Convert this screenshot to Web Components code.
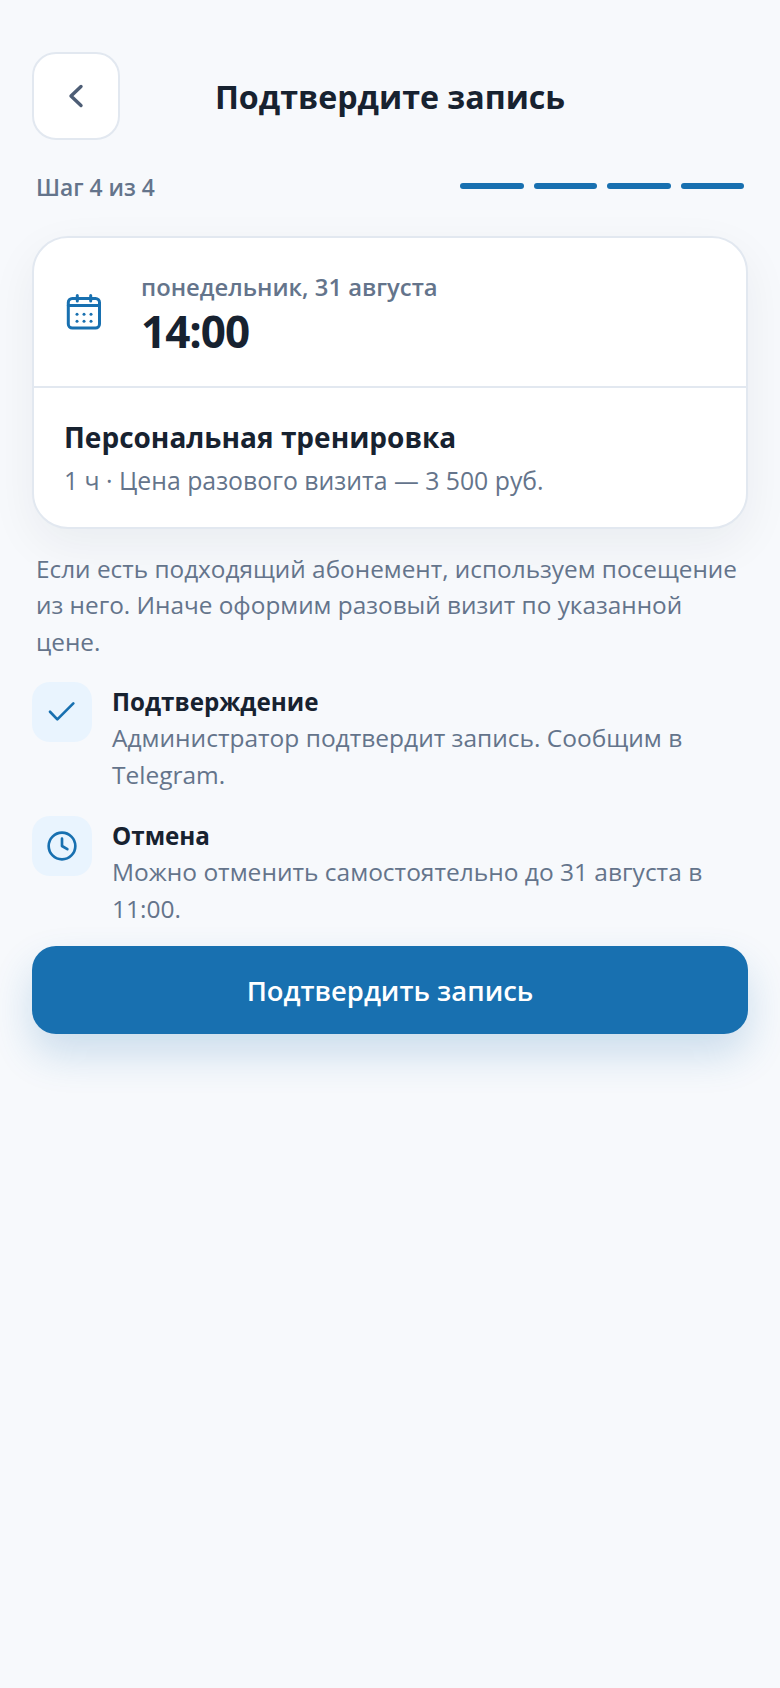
<!doctype html>
<html lang="ru">
<head>
<meta charset="utf-8">
<title>Подтвердите запись</title>
<style>
  html, body { margin: 0; background: #f7f9fc; }
  body { font-family: "Open Sans", sans-serif; color: #172230; }
</style>
</head>
<body>
<booking-page>
  <page-header title="Подтвердите запись"></page-header>
  <step-progress label="Шаг 4 из 4" steps="4"></step-progress>
  <slot-card day="понедельник, 31 августа" time="14:00" service="Персональная тренировка" details="1 ч · Цена разового визита — 3 500 руб."></slot-card>
  <booking-note>Если есть подходящий абонемент, используем посещение из него. Иначе оформим разовый визит по указанной цене.</booking-note>
  <info-row icon="check" heading="Подтверждение" text="Администратор подтвердит запись. Сообщим в Telegram."></info-row>
  <info-row icon="clock" heading="Отмена" text="Можно отменить самостоятельно до 31 августа в 11:00."></info-row>
  <confirm-button>Подтвердить запись</confirm-button>
</booking-page>
<script>
const ICONS = {
  check: '<path d="M3 11.8l5.5 5.7 12-12"/>',
  clock: '<circle cx="12" cy="12" r="10"/><path d="M12 6.5V12l4 2.4"/>'
};

class BookingPage extends HTMLElement {
  constructor() {
    super();
    this.attachShadow({ mode: 'open' });
    this.shadowRoot.innerHTML = `
      <style>
        :host { display: flex; flex-direction: column; padding: 52px 32px 32px; height: 1688px; box-sizing: border-box; overflow: hidden; }
      </style>
      <slot></slot>
    `;
  }
}

class PageHeader extends HTMLElement {
  constructor() {
    super();
    this.attachShadow({ mode: 'open' });
    this.shadowRoot.innerHTML = `
      <style>
        :host { display: flex; align-items: center; height: 88px; }
        button { width: 88px; height: 88px; box-sizing: border-box; padding: 0; background: #fff; border: 2px solid #e2e8f0; border-radius: 24px; display: flex; align-items: center; justify-content: center; }
        svg { width: 40px; height: 40px; fill: none; stroke: #4d5d75; stroke-width: 3.4; stroke-linecap: round; stroke-linejoin: round; }
        h1 { flex: 1; margin: 2px 88px 0 0; text-align: center; font-size: 32.2px; line-height: 86px; font-weight: 700; color: #172230; }
      </style>
      <button aria-label="Назад"><svg viewBox="0 0 40 40"><path d="M25 10.5L15 20l10 9.5"/></svg></button>
      <h1>${this.getAttribute('title')}</h1>
    `;
  }
}

class StepProgress extends HTMLElement {
  constructor() {
    super();
    this.attachShadow({ mode: 'open' });
    const n = Number(this.getAttribute('steps')) || 0;
    this.shadowRoot.innerHTML = `
      <style>
        :host { display: flex; align-items: center; justify-content: space-between; margin-top: 28px; padding: 0 4px; height: 36px; }
        span { font-size: 22.8px; font-weight: 600; color: #64748b; margin-top: 2px; }
        .bars { display: flex; gap: 10px; width: 284px; }
        i { flex: 1; height: 6px; border-radius: 3px; background: #1870b0; }
      </style>
      <span>${this.getAttribute('label')}</span>
      <div class="bars">${'<i></i>'.repeat(n)}</div>
    `;
  }
}

class SlotCard extends HTMLElement {
  constructor() {
    super();
    this.attachShadow({ mode: 'open' });
    this.shadowRoot.innerHTML = `
      <style>
        :host { display: block; margin-top: 32px; background: #fff; border: 2px solid #e2e8f0; border-radius: 36px; box-shadow: 0 16px 48px rgba(23, 34, 48, .06); }
        .top { display: flex; align-items: center; gap: 36px; height: 148px; padding: 0 30px; border-bottom: 2px solid #e2e8f0; }
        svg { width: 40px; height: 40px; flex: none; fill: none; stroke: #1870b0; stroke-width: 3; stroke-linecap: round; stroke-linejoin: round; }
        .text { padding-top: 3px; }
        .day { font-size: 23.8px; line-height: 34px; font-weight: 600; color: #64748b; padding-left: 1px; }
        .time { font-size: 44px; line-height: 54px; font-weight: 700; letter-spacing: -1px; color: #172230; padding-left: 1px; }
        .bottom { padding: 30px 30px 29px; }
        .service { font-size: 28px; line-height: 38px; font-weight: 700; color: #172230; }
        .details { margin-top: 6px; font-size: 24.8px; line-height: 36px; color: #64748b; }
      </style>
      <div class="top">
        <svg viewBox="0 0 40 40"><rect x="4.3" y="6.5" width="31.2" height="29.5" rx="4"/><path d="M4.3 13.5h31.2M13.3 3.5v5.5M26.7 3.5v5.5"/><g fill="#1870b0" stroke="none"><circle cx="13" cy="22.3" r="1.5"/><circle cx="20" cy="22.3" r="1.5"/><circle cx="27" cy="22.3" r="1.5"/><circle cx="13" cy="29.3" r="1.5"/><circle cx="20" cy="29.3" r="1.5"/><circle cx="27" cy="29.3" r="1.5"/></g></svg>
        <div class="text">
          <div class="day">${this.getAttribute('day')}</div>
          <div class="time">${this.getAttribute('time')}</div>
        </div>
      </div>
      <div class="bottom">
        <div class="service">${this.getAttribute('service')}</div>
        <div class="details">${this.getAttribute('details')}</div>
      </div>
    `;
  }
}

class BookingNote extends HTMLElement {
  constructor() {
    super();
    this.attachShadow({ mode: 'open' });
    this.shadowRoot.innerHTML = `
      <style>
        :host { display: block; margin: 22px 0 0 4px; font-size: 24.35px; line-height: 36.4px; color: #64748b; }
      </style>
      <slot></slot>
    `;
  }
}

class InfoRow extends HTMLElement {
  constructor() {
    super();
    this.attachShadow({ mode: 'open' });
    this.shadowRoot.innerHTML = `
      <style>
        :host { display: flex; gap: 20px; margin-top: 22px; }
        :host(:last-of-type) { margin-top: 23.2px; }
        .badge { width: 60px; height: 60px; flex: none; border-radius: 18px; background: #e9f4fe; display: flex; align-items: center; justify-content: center; }
        svg { width: 32px; height: 32px; fill: none; stroke: #1870b0; stroke-width: 2; stroke-linecap: round; stroke-linejoin: round; }
        .text { padding-top: 2px; }
        h3 { margin: 0; font-size: 24.2px; line-height: 36px; font-weight: 700; color: #172230; }
        p { margin: 0; font-size: 24.5px; line-height: 36.4px; color: #64748b; }
      </style>
      <div class="badge"><svg viewBox="0 0 24 24">${ICONS[this.getAttribute('icon')]}</svg></div>
      <div class="text">
        <h3>${this.getAttribute('heading')}</h3>
        <p>${this.getAttribute('text')}</p>
      </div>
    `;
  }
}

class ConfirmButton extends HTMLElement {
  constructor() {
    super();
    this.attachShadow({ mode: 'open' });
    this.shadowRoot.innerHTML = `
      <style>
        :host { display: block; margin-top: 19.2px; }
        button { width: 100%; height: 88px; border: 0; border-radius: 24px; background: #1870b0; color: #fff; font: 600 27.4px "Open Sans", sans-serif; box-shadow: 0 20px 40px rgba(24, 112, 176, .2); }
      </style>
      <button><slot></slot></button>
    `;
  }
}

customElements.define('booking-page', BookingPage);
customElements.define('page-header', PageHeader);
customElements.define('step-progress', StepProgress);
customElements.define('slot-card', SlotCard);
customElements.define('booking-note', BookingNote);
customElements.define('info-row', InfoRow);
customElements.define('confirm-button', ConfirmButton);
</script>
</body>
</html>
